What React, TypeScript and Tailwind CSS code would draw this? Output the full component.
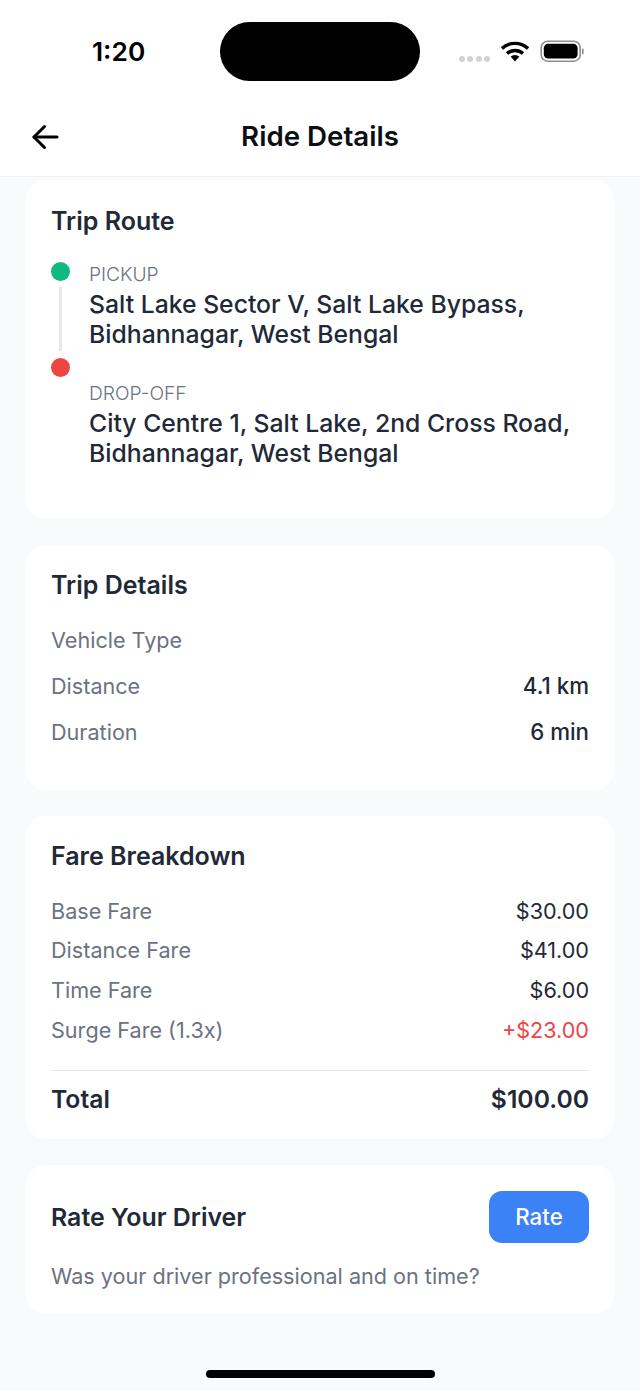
import React from "react";

function Row({ label, value, valueClass = "text-[#1f2937]" }: { label: string; value: string; valueClass?: string }) {
  return (
    <div className="flex justify-between items-center h-[39.75px] text-[21.6px]">
      <span className="text-[#6b7280]">{label}</span>
      <span className={valueClass}>{value}</span>
    </div>
  );
}

function DetailRow({ label, value }: { label: string; value?: string }) {
  return (
    <div className="flex justify-between items-center h-[46px] text-[21.6px]">
      <span className="text-[#6b7280]">{label}</span>
      {value && <span className="text-[22.3px] text-[#1f2937] font-medium">{value}</span>}
    </div>
  );
}

function Stop({ label, lines }: { label: string; lines: string[] }) {
  return (
    <div>
      <div className="text-[19.2px] leading-[29px] text-[#6b7280] font-light">{label}</div>
      <div className="text-[24.75px] leading-[30px] text-[#1f2937] font-[450]">
        {lines.map((l) => (
          <div key={l}>{l}</div>
        ))}
      </div>
    </div>
  );
}

export default function App() {
  return (
    <div
      className="w-[640px] h-[1391px] bg-[#f9fafb] overflow-hidden flex flex-col relative"
      style={{ fontFamily: "Inter, 'Noto Sans', sans-serif" }}
    >
      <div className="bg-white h-[177px] shrink-0 border-b border-[#f0f1f3] flex flex-col">
        <div className="h-[96px] relative shrink-0">
          <span className="absolute left-[92px] top-[35px] text-[26.3px] leading-[34px] font-semibold text-black">1:20</span>
          <div className="absolute left-[220px] top-[22px] w-[200px] h-[59px] rounded-[30px] bg-black" />
          <div className="absolute left-[459px] top-[56px] flex gap-[2.3px]">
            <i className="block w-[6px] h-[6px] rounded-full bg-[#d1d1d6]" />
            <i className="block w-[6px] h-[6px] rounded-full bg-[#d1d1d6]" />
            <i className="block w-[6px] h-[6px] rounded-full bg-[#d1d1d6]" />
            <i className="block w-[6px] h-[6px] rounded-full bg-[#d1d1d6]" />
          </div>
          <svg className="absolute left-[501px] top-[41px]" width="28" height="21" viewBox="0 0 28 21">
            <path d="M1 7.5 A19 19 0 0 1 27 7.5" fill="none" stroke="#000" strokeWidth="3.4" />
            <path d="M6 12.5 A12 12 0 0 1 22 12.5" fill="none" stroke="#000" strokeWidth="3.4" />
            <path d="M9.6 15.6 A6.5 6.5 0 0 1 18.4 15.6 L14 20.5 Z" fill="#000" />
          </svg>
          <svg className="absolute left-[540px] top-[40px]" width="45" height="23" viewBox="0 0 45 23">
            <rect x="1.2" y="1.2" width="39" height="20" rx="6.5" fill="none" stroke="#8e8e93" strokeWidth="1.6" />
            <rect x="3.8" y="3.8" width="33.8" height="14.8" rx="4.4" fill="#000" />
            <rect x="42" y="8.5" width="1.6" height="6" rx="0.8" fill="#8e8e93" />
          </svg>
        </div>
        <div className="flex-1 flex items-center justify-center relative pt-[1px]">
          <svg className="absolute left-[31px] top-[28px]" width="28" height="26" viewBox="0 0 28 26" fill="none" stroke="#000" strokeWidth="3" strokeLinecap="round" strokeLinejoin="round">
            <path d="M26 13H3" />
            <path d="M13.5 2.5 3 13l10.5 10.5" />
          </svg>
          <span className="text-[27.7px] font-semibold text-[#0b0f14]">Ride Details</span>
        </div>
      </div>

      <div className="flex-1 px-[26px] pt-[3px] flex flex-col gap-[26px]">
        <section className="bg-white rounded-[20px] h-[339px] px-[25px] pt-[24px]">
          <h2 className="text-[25px] leading-[34px] font-semibold text-[#1f2937]">Trip Route</h2>
          <div className="flex mt-[21px] gap-[19px]">
            <div className="w-[19px] flex flex-col items-center shrink-0 pt-[3px]">
              <div className="w-[19px] h-[19px] rounded-full bg-[#10b981]" />
              <div className="w-[3px] h-[64px] bg-[#e5e7eb] mt-[6px] mb-[7px]" />
              <div className="w-[19px] h-[19px] rounded-full bg-[#ef4444]" />
            </div>
            <div className="flex flex-col gap-[30px] pt-[1px]">
              <Stop label="PICKUP" lines={["Salt Lake Sector V, Salt Lake Bypass,", "Bidhannagar, West Bengal"]} />
              <Stop label="DROP-OFF" lines={["City Centre 1, Salt Lake, 2nd Cross Road,", "Bidhannagar, West Bengal"]} />
            </div>
          </div>
        </section>

        <section className="bg-white rounded-[20px] h-[245px] px-[25px] pt-[23px]">
          <h2 className="text-[25px] leading-[34px] font-semibold text-[#1f2937]">Trip Details</h2>
          <div className="mt-[15px]">
            <DetailRow label="Vehicle Type" />
            <DetailRow label="Distance" value="4.1 km" />
            <DetailRow label="Duration" value="6 min" />
          </div>
        </section>

        <section className="bg-white rounded-[20px] h-[323px] px-[25px] pt-[23px]">
          <h2 className="text-[25px] leading-[34px] font-semibold text-[#1f2937]">Fare Breakdown</h2>
          <div className="mt-[18px]">
            <Row label="Base Fare" value="$30.00" />
            <Row label="Distance Fare" value="$41.00" />
            <Row label="Time Fare" value="$6.00" />
            <Row label="Surge Fare (1.3x)" value="+$23.00" valueClass="text-[#ef4444]" />
          </div>
          <div className="mt-[20px] border-t border-[#e5e7eb] pt-[11px] flex justify-between items-center text-[24.7px] leading-[34px] font-semibold text-[#1f2937]">
            <span>Total</span>
            <span>$100.00</span>
          </div>
        </section>

        <section className="bg-white rounded-[20px] h-[149px] px-[25px] pt-[26px]">
          <div className="flex justify-between items-center">
            <h2 className="text-[24.9px] pt-[2px] font-semibold text-[#1f2937]">Rate Your Driver</h2>
            <button className="w-[100px] h-[52px] rounded-[13px] bg-[#3b82f6] text-white text-[22.3px] font-medium">Rate</button>
          </div>
          <p className="mt-[16px] text-[21.6px] leading-[34px] text-[#6b7280]">Was your driver professional and on time?</p>
        </section>
      </div>

      <div className="absolute left-[206px] top-[1370px] w-[229px] h-[8px] rounded-full bg-black" />
    </div>
  );
}
